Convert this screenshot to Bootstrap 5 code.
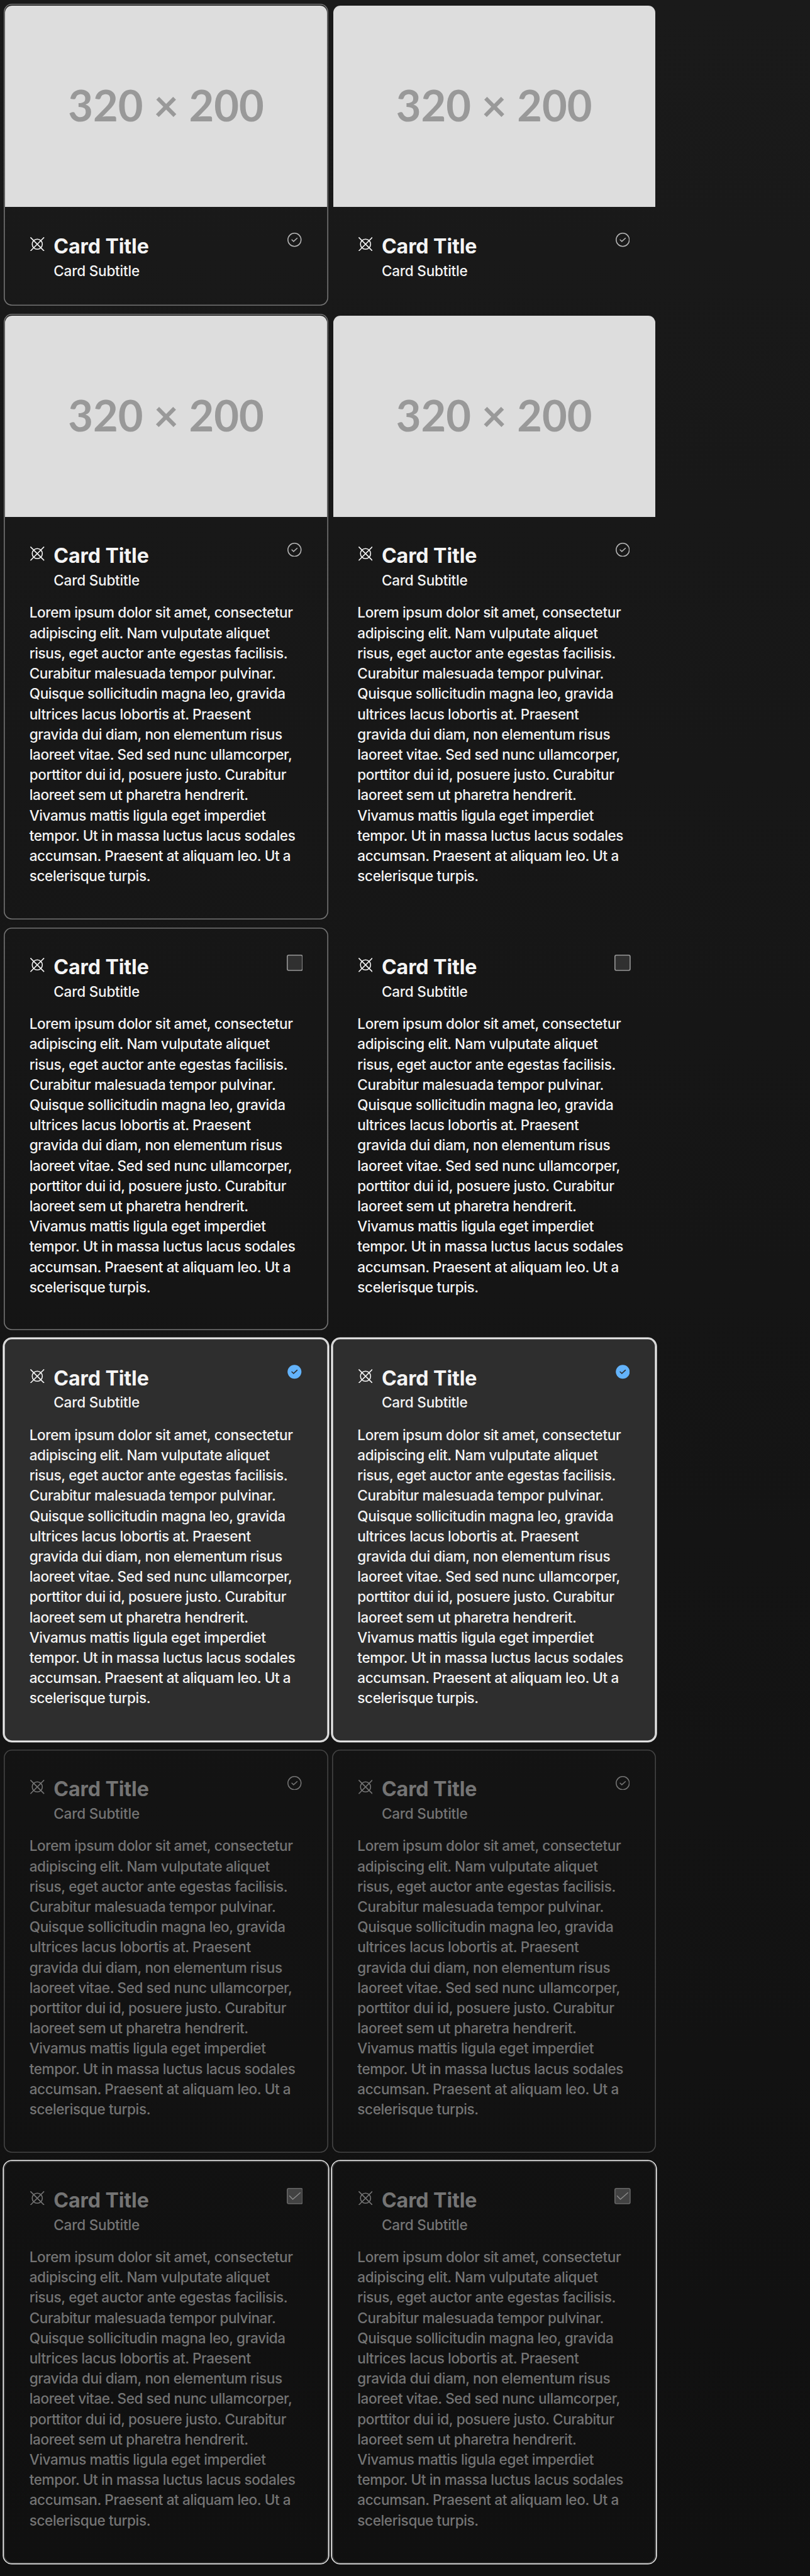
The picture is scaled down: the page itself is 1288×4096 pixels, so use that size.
<!DOCTYPE html>
<html lang="en" data-bs-theme="dark">
<head>
<meta charset="utf-8">
<meta name="viewport" content="width=device-width, initial-scale=1">
<title>Cards</title>
<link href="https://cdn.jsdelivr.net/npm/bootstrap@5.3.0/dist/css/bootstrap.min.css" rel="stylesheet">
<style>
  body { background: #111; margin: 0; font-family: Inter, "Liberation Sans", sans-serif; }
  .board { --u: .805px; min-height: 4096px; padding: calc(8 * var(--u)); gap: calc(16 * var(--u));
    background: linear-gradient(to bottom, #1a1a1a, #101010); }
  .pair { gap: calc(8 * var(--u)); }
  .tile { width: calc(640 * var(--u)); height: calc(796 * var(--u)); position: relative; background: transparent; color: #f4f4f4;
    border: 0; border-radius: calc(16 * var(--u)); box-shadow: inset 0 0 0 calc(2 * var(--u)) var(--edge, transparent); flex: none; }
  .tile.outlined { --edge: #737373; }
  .tile.brief { height: calc(596 * var(--u)); }
  .tile.tall { height: calc(1196 * var(--u)); }
  .tile.chosen { background: #2e2e2e; box-shadow: inset 0 0 0 calc(2 * var(--u)) #e8e8e8, 0 0 0 calc(2 * var(--u)) #ececec; }
  .tile.off { --edge: #434343; color: #747474; }
  .tile.off.ringed { box-shadow: inset 0 0 0 calc(2 * var(--u)) #434343, 0 0 0 calc(2 * var(--u)) #f0f0f0; }
  .photo { height: calc(397.5 * var(--u)); margin: calc(3.25 * var(--u)) calc(2 * var(--u)) calc(-.75 * var(--u)); padding-bottom: calc(4 * var(--u));
    background: #ddd; color: #999; border-radius: calc(14 * var(--u)) calc(14 * var(--u)) 0 0; font: 700 calc(85.2 * var(--u))/1 Lato, sans-serif; }
  .inner { padding: calc(50 * var(--u)) calc(50 * var(--u)) 0; }
  .glyph { width: calc(28 * var(--u)); height: calc(28 * var(--u)); margin: calc(10 * var(--u)) calc(18 * var(--u)) 0 calc(2 * var(--u)); flex: none; }
  .mark-circle { width: calc(28 * var(--u)); height: calc(28 * var(--u)); margin: calc(2 * var(--u)) calc(2 * var(--u)) 0 0; flex: none; color: #b4b4b4; }
  .off .mark-circle { color: #747474; }
  .mark-box { width: calc(32 * var(--u)); height: calc(32 * var(--u)); margin-top: calc(4 * var(--u)); flex: none; }
  .head { height: calc(120 * var(--u)); }
  .ttl { font-size: calc(40 * var(--u)); line-height: calc(56 * var(--u)); font-weight: 700; margin: 0; letter-spacing: -.004em; color: inherit; }
  .sub { font-size: calc(28 * var(--u)); line-height: calc(40 * var(--u)); font-weight: 500; margin: calc(1 * var(--u)) 0 0; letter-spacing: -.01em; }
  .copy { font-size: calc(28 * var(--u)); line-height: calc(40 * var(--u)); font-weight: 500; margin: calc(.7 * var(--u)) 0 0; letter-spacing: -.0168em; white-space: nowrap; }
</style>
</head>
<body>
<main class="board d-flex flex-column" id="board"></main>
<script src="https://cdn.jsdelivr.net/npm/bootstrap@5.3.0/dist/js/bootstrap.bundle.min.js"></script>
<script>
  const lines = ["Lorem ipsum dolor sit amet, consectetur", "adipiscing elit. Nam vulputate aliquet", "risus, eget auctor ante egestas facilisis.",
    "Curabitur malesuada tempor pulvinar.", "Quisque sollicitudin magna leo, gravida", "ultrices lacus lobortis at. Praesent",
    "gravida dui diam, non elementum risus", "laoreet vitae. Sed sed nunc ullamcorper,", "porttitor dui id, posuere justo. Curabitur",
    "laoreet sem ut pharetra hendrerit.", "Vivamus mattis ligula eget imperdiet", "tempor. Ut in massa luctus lacus sodales",
    "accumsan. Praesent at aliquam leo. Ut a", "scelerisque turpis."];
  const glyph = `<svg class="glyph" viewBox="0 0 28 28" fill="none" stroke="currentColor" stroke-width="2"><circle cx="14" cy="14" r="10"/><path d="M.5.5l27 27M27.5.5l-27 27"/></svg>`;
  const marks = {
    ring: `<svg class="mark-circle" viewBox="0 0 28 28" fill="none" stroke="currentColor" stroke-width="1.9"><circle cx="14" cy="14" r="13"/><path d="M8.8 14l3.4 3.3 7-6.5" stroke-linecap="round"/></svg>`,
    full: `<svg class="mark-circle" viewBox="0 0 28 28" fill="none"><circle cx="14" cy="14" r="13.7" fill="#63b3fb"/><path d="M8.8 14l3.4 3.3 7-6.5" stroke="#2e2e2e" stroke-width="2" stroke-linecap="round"/></svg>`,
    box: `<svg class="mark-box" viewBox="0 0 32 32"><rect x="1" y="1" width="30" height="30" rx="3" fill="#303030" stroke="#979797" stroke-width="2"/></svg>`,
    boxOn: `<svg class="mark-box" viewBox="0 0 32 32"><rect x="1" y="1" width="30" height="30" rx="3" fill="#424242" stroke="#676767" stroke-width="2"/><path d="M5 15.3l6.8 7L27 9" fill="none" stroke="#8c8c8c" stroke-width="1.7"/></svg>`
  };
  const rows = [
    { left: "brief outlined", right: "brief", mark: "ring", photo: true, copy: false },
    { left: "tall outlined", right: "tall", mark: "ring", photo: true, copy: true },
    { left: "outlined", right: "", mark: "box", photo: false, copy: true },
    { left: "chosen", right: "chosen", mark: "full", photo: false, copy: true },
    { left: "off", right: "off", mark: "ring", photo: false, copy: true },
    { left: "off ringed", right: "off ringed", mark: "boxOn", photo: false, copy: true }
  ];
  const tile = (cls, r) => `<article class="card tile ${cls}">
    ${r.photo ? `<div class="photo d-flex align-items-center justify-content-center">320 × 200</div>` : ""}
    <div class="inner">
      <header class="head d-flex align-items-start">${glyph}<div class="flex-grow-1"><h2 class="ttl">Card Title</h2><p class="sub">Card Subtitle</p></div>${marks[r.mark]}</header>
      ${r.copy ? `<p class="copy">${lines.join("<br>")}</p>` : ""}
    </div>
  </article>`;
  document.getElementById("board").innerHTML = rows.map(r =>
    `<section class="pair d-flex">${tile(r.left, r)}${tile(r.right, r)}</section>`).join("");
</script>
</body>
</html>
